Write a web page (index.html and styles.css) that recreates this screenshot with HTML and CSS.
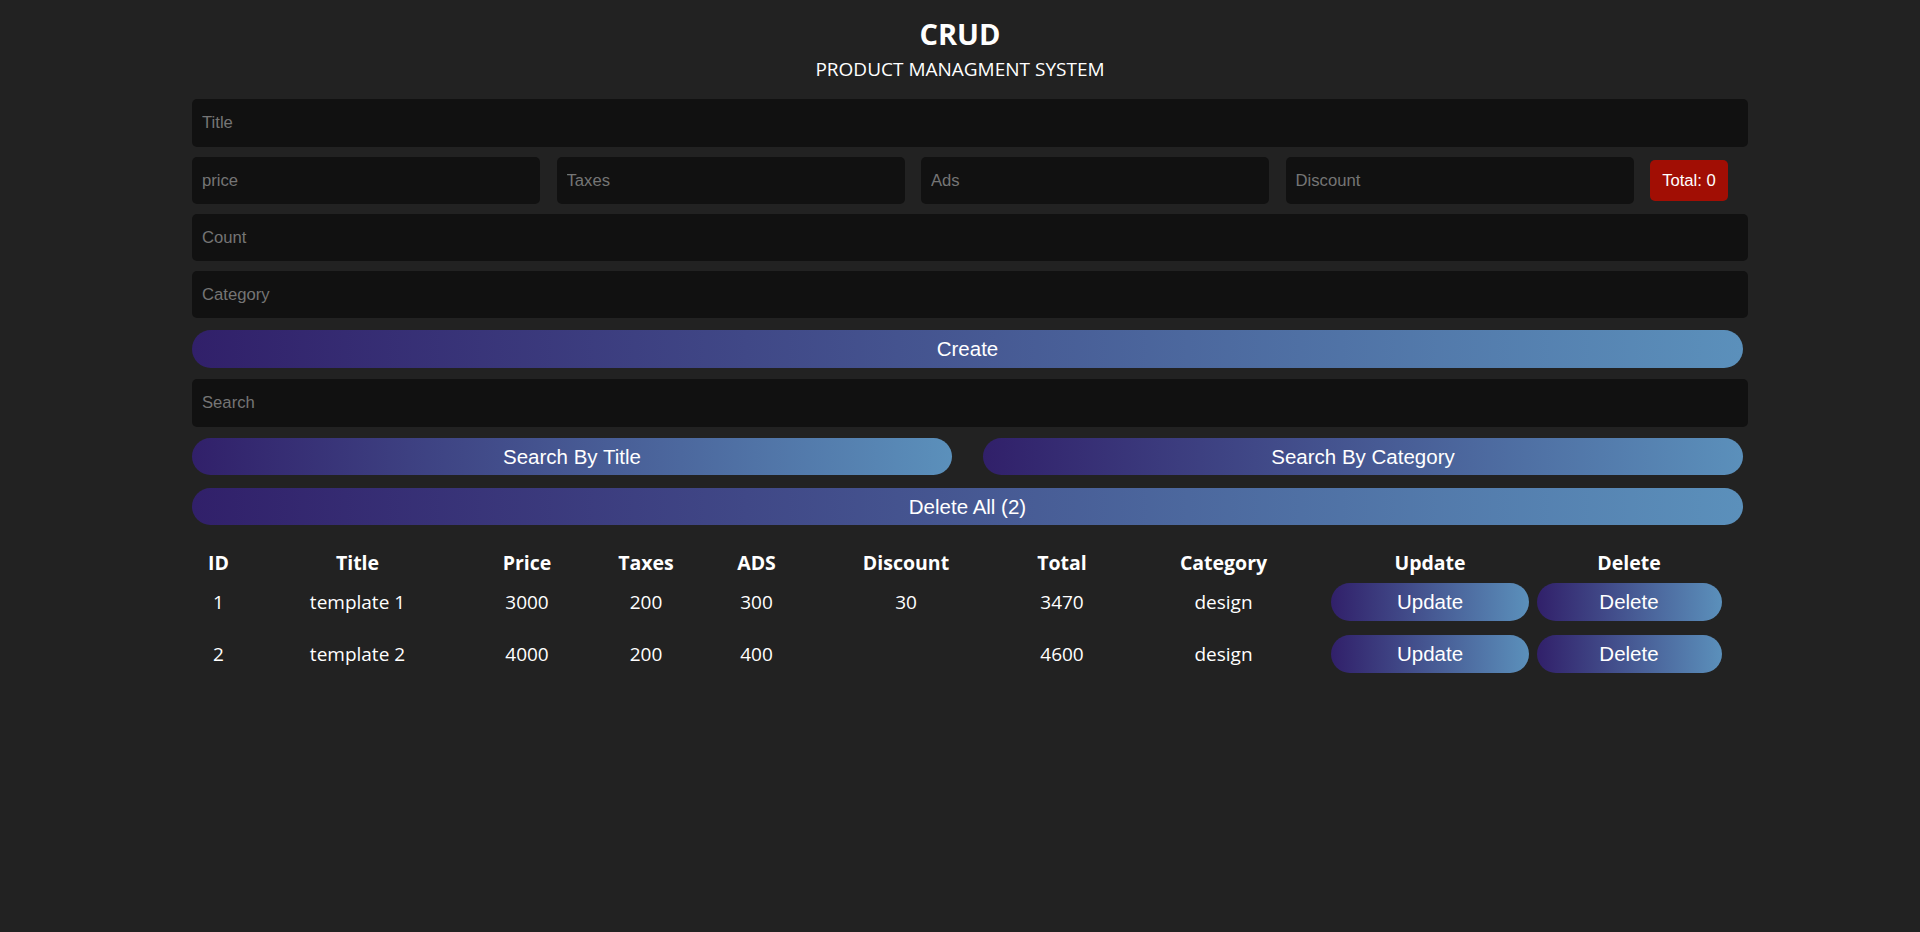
FILE: index.html
```html
<!DOCTYPE html>
<html lang="en">
<head>
<meta charset="utf-8">
<title>CRUD</title>
<link rel="stylesheet" href="styles.css">
</head>
<body>
<div class="crud">
  <div class="head">
    <h2 class="head-title">CRUD</h2>
    <p class="head-sub">PRODUCT MANAGMENT SYSTEM</p>
  </div>
  <div class="inputs">
    <input class="field field-title" type="text" placeholder="Title">
    <div class="price">
      <input class="field field-small" type="number" placeholder="price">
      <input class="field field-small" type="number" placeholder="Taxes">
      <input class="field field-small" type="number" placeholder="Ads">
      <input class="field field-small" type="number" placeholder="Discount">
      <small class="total">Total: 0</small>
    </div>
    <input class="field field-gap" type="number" placeholder="Count">
    <input class="field field-gap" type="text" placeholder="Category">
    <button class="btn btn-create">Create</button>
  </div>
  <div class="outputs">
    <div class="search-block">
      <input class="field" type="text" placeholder="Search">
      <div class="btn-search">
        <button class="btn btn-half">Search By Title</button>
        <button class="btn btn-half">Search By Category</button>
      </div>
    </div>
    <div class="delete-all">
      <button class="btn btn-wide">Delete All (2)</button>
    </div>
    <table class="table">
      <colgroup>
        <col class="c-id"><col class="c-title"><col class="c-price"><col class="c-taxes"><col class="c-ads"><col class="c-discount"><col class="c-total"><col class="c-category"><col class="c-update"><col class="c-delete">
      </colgroup>
      <thead>
        <tr class="head-row">
          <th>ID</th><th>Title</th><th>Price</th><th>Taxes</th><th>ADS</th><th>Discount</th><th>Total</th><th>Category</th><th>Update</th><th>Delete</th>
        </tr>
      </thead>
      <tbody>
        <tr class="body-row">
          <td>1</td><td>template 1</td><td>3000</td><td>200</td><td>300</td><td>30</td><td>3470</td><td>design</td>
          <td><button class="btn btn-update">Update</button></td>
          <td><button class="btn btn-delete">Delete</button></td>
        </tr>
        <tr class="body-row">
          <td>2</td><td>template 2</td><td>4000</td><td>200</td><td>400</td><td></td><td>4600</td><td>design</td>
          <td><button class="btn btn-update">Update</button></td>
          <td><button class="btn btn-delete">Delete</button></td>
        </tr>
      </tbody>
    </table>
  </div>
</div>
</body>
</html>
```
FILE: styles.css
```css
* { box-sizing: border-box; }

html, body {
  margin: 0;
  padding: 0;
  background: #222222;
  color: #ffffff;
  font-family: "Open Sans", "Noto Sans", sans-serif;
}

.crud {
  width: 1536px;
  margin: 0 auto;
  padding-top: 14px;
}

.head {
  text-align: center;
}

.head-title {
  margin: 0;
  font-size: 29px;
  font-weight: 700;
  line-height: 40px;
}

.head-sub {
  margin: 3px 0 0;
  font-size: 19px;
  font-weight: 400;
  line-height: 24px;
}

.inputs {
  margin-top: 18px;
  display: flex;
  flex-direction: column;
}

.field {
  display: block;
  width: calc(100% + 20px);
  height: 47px;
  border: none;
  outline: none;
  background: #111111;
  border-radius: 5px;
  padding: 0 10px;
  color: #ffffff;
  font-family: "Liberation Sans", Arial, sans-serif;
  font-size: 16.67px;
}

.field::placeholder {
  color: #757575;
}

.field-title {
  height: 48px;
}

.field-gap {
  margin-top: 10px;
}

.price {
  margin-top: 10px;
  display: flex;
  align-items: center;
  gap: 16.5px;
  width: 100%;
}

.field-small {
  width: auto;
  flex: 1 1 0;
  min-width: 0;
}

.total {
  flex: 0 0 78px;
  height: 41px;
  background: #a10e04;
  border-radius: 5px;
  color: #ffffff;
  font-family: "Liberation Sans", Arial, sans-serif;
  font-size: 16.67px;
  display: flex;
  align-items: center;
  justify-content: center;
}

.btn {
  display: block;
  border: none;
  cursor: pointer;
  color: #ffffff;
  font-family: "Liberation Sans", Arial, sans-serif;
  font-size: 20.5px;
  background: linear-gradient(to right, #31206a, #5b90bb);
  border-radius: 20px;
  padding: 0;
}

.btn-create {
  margin-top: 12px;
  width: calc(100% + 15px);
  height: 38px;
}

.outputs {
  display: flex;
  flex-direction: column;
}

.search-block {
  margin-top: 11px;
}

.search-block .field {
  height: 48px;
}

.btn-search {
  margin-top: 11px;
  width: calc(100% + 15px);
  display: flex;
  justify-content: space-between;
}

.btn-half {
  width: 49%;
  height: 37px;
}

.delete-all {
  margin-top: 13px;
}

.btn-wide {
  width: calc(100% + 15px);
  height: 37px;
}

.table {
  margin-top: 24px;
  width: 100%;
  table-layout: fixed;
  border-collapse: collapse;
  border-spacing: 0;
}

.c-id { width: 53px; }
.c-title { width: 225px; }
.c-price { width: 114px; }
.c-taxes { width: 124px; }
.c-ads { width: 97px; }
.c-discount { width: 202px; }
.c-total { width: 110px; }
.c-category { width: 213px; }
.c-update { width: 200px; }
.c-delete { width: 198px; }

.table th,
.table td {
  padding: 0;
  text-align: center;
  vertical-align: middle;
}

.table th {
  font-size: 19.5px;
  font-weight: 700;
  line-height: 27px;
}

.head-row {
  height: 27px;
}

.table td {
  font-size: 19px;
  font-weight: 400;
  line-height: 26px;
}

.body-row {
  height: 52px;
}

.btn-update {
  width: 198px;
  height: 38px;
  margin: -1px auto 0;
}

.btn-delete {
  width: 185px;
  height: 38px;
  margin: -1px auto 0;
}
```
